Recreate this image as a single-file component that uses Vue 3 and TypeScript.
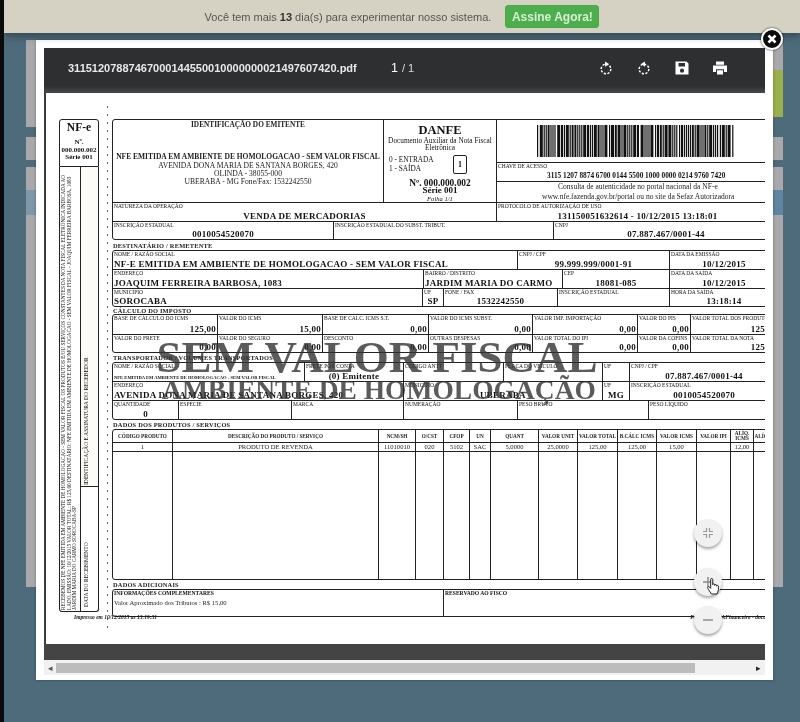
<template>
  <div class="screen">
    <!-- barra de teste -->
    <div class="trial">
      <span>Você tem mais <b>13</b> dia(s) para experimentar nosso sistema.</span>
      <button class="trial-btn" type="button">Assine Agora!</button>
    </div>

    <div class="stage">
      <!-- painéis da aplicação atrás do modal -->
      <div class="behind behind--left">
        <i class="seg seg-a"></i><i class="seg seg-b"></i><i class="seg seg-c"></i><i class="seg seg-blue"></i><i class="seg seg-d"></i>
      </div>

      <div class="modal">
        <button class="close" type="button" aria-label="Fechar">
          <svg viewBox="0 0 12 12" width="12" height="12"><path d="M2.5 2.5l7 7M9.5 2.5l-7 7" stroke="#fff" stroke-width="2.6" /></svg>
        </button>

        <div class="viewer">
          <div class="toolbar">
            <span class="file">{{ fileName }}</span>
            <span class="pages"><b>1</b> / 1</span>
            <div class="tools">
              <svg viewBox="0 0 16 16" width="16" height="16"><circle cx="8" cy="9" r="4.8" fill="none" stroke="#fff" stroke-width="1.5" stroke-dasharray="2.2 1.5" /><path d="M7 1.4l4 2.7-4 2.7z" fill="#fff" /></svg>
              <svg viewBox="0 0 16 16" width="16" height="16"><circle cx="8" cy="9" r="4.8" fill="none" stroke="#fff" stroke-width="1.5" stroke-dasharray="2.2 1.5" /><path d="M9 1.4l-4 2.7 4 2.7z" fill="#fff" /></svg>
              <svg viewBox="0 0 16 16" width="16" height="16"><path fill="#fff" fill-rule="evenodd" d="M1.5 1.5h11l2 2v11h-13zM4.5 3v3.6h6.5V3zM8 8.6a2.1 2.1 0 100 4.2 2.1 2.1 0 000-4.2z" /></svg>
              <svg viewBox="0 0 16 16" width="16" height="16"><path fill="#fff" fill-rule="evenodd" d="M4 1.5h8v3.2H4zM1 5.6h14v6.4h-3V9.3H4V12H1zM5 10.3h6V14.5H5z" /></svg>
            </div>
          </div>

          <div class="page">
            <div class="sheet">
              <!-- canhoto -->
              <aside class="stub">
                <div class="stub-head">
                  <strong>NF-e</strong>
                  <span>Nº.</span>
                  <span>000.000.002</span>
                  <span>Série 001</span>
                </div>
                <div class="stub-body">
                  <div class="stub-text">{{ stubText }}</div>
                  <div class="stub-side">
                    <div class="stub-sign">IDENTIFICAÇÃO E ASSINATURA DO RECEBEDOR</div>
                    <div class="stub-date">DATA DO RECEBIMENTO</div>
                  </div>
                </div>
              </aside>

              <div class="dash"></div>

              <div class="form">
                <!-- emitente / danfe / chave -->
                <section class="block">
                  <div class="head-row">
                    <div class="emit">
                      <b class="emit-title">IDENTIFICAÇÃO DO EMITENTE</b>
                      <b class="emit-name">NFE EMITIDA EM AMBIENTE DE HOMOLOGACAO - SEM VALOR FISCAL</b>
                      <span>AVENIDA DONA MARIA DE SANTANA BORGES, 420</span>
                      <span>OLINDA - 38055-000</span>
                      <span>UBERABA - MG Fone/Fax: 1532242550</span>
                    </div>
                    <div class="danfe">
                      <strong>DANFE</strong>
                      <span class="danfe-sub">Documento Auxiliar da Nota Fiscal Eletrônica</span>
                      <div class="danfe-io">
                        <span>0 - ENTRADA<br />1 - SAÍDA</span>
                        <b class="danfe-box">1</b>
                      </div>
                      <b class="danfe-num">Nº. 000.000.002<br /><span class="danfe-serie">Série 001</span></b>
                      <em>Folha 1/1</em>
                    </div>
                    <div class="key">
                      <div class="barcode">
                        <svg width="197" height="32" viewBox="0 0 197 32">
                          <rect v-for="bar in bars" :key="bar.x" :x="bar.x" y="0" :width="bar.w" height="32" fill="#111" />
                        </svg>
                      </div>
                      <div class="key-cell">
                        <span class="label">CHAVE DE ACESSO</span>
                        <b class="key-value">3115 1207 8874 6700 0144 5500 1000 0000 0214 9760 7420</b>
                      </div>
                      <div class="key-note">
                        <span>Consulta de autenticidade no portal nacional da NF-e</span>
                        <span>www.nfe.fazenda.gov.br/portal ou no site da Sefaz Autorizadora</span>
                      </div>
                    </div>
                  </div>
                  <FormRow v-for="(row, i) in topRows" :key="i" :row="row" />
                </section>

                <h4 class="title title--wide">DESTINATÁRIO / REMETENTE</h4>
                <section class="block">
                  <FormRow v-for="(row, i) in clientRows" :key="i" :row="row" />
                </section>

                <h4 class="title title--tight">CÁLCULO DO IMPOSTO</h4>
                <section class="block">
                  <FormRow v-for="(row, i) in taxRows" :key="i" :row="row" />
                </section>

                <h4 class="title">TRANSPORTADOR / VOLUMES TRANSPORTADOS</h4>
                <section class="block">
                  <FormRow v-for="(row, i) in carrierRows" :key="i" :row="row" />
                </section>

                <h4 class="title">DADOS DOS PRODUTOS / SERVIÇOS</h4>
                <section class="block products">
                  <div v-for="col in productCols" :key="col.label" class="prod-col" :style="{ width: col.w + 'px' }">
                    <div class="prod-head">{{ col.label }}</div>
                    <div class="prod-value">{{ col.value }}</div>
                  </div>
                </section>

                <h4 class="title">DADOS ADICIONAIS</h4>
                <section class="block">
                  <div class="row extra">
                    <div class="cell extra-info">
                      <b class="label">INFORMAÇÕES COMPLEMENTARES</b>
                      <span>Valor Aproximado dos Tributos : R$ 15,00</span>
                    </div>
                    <div class="cell extra-fisco"><b class="label">RESERVADO AO FISCO</b></div>
                  </div>
                </section>
              </div>
            </div>

            <div class="sheet-foot">
              <em>Impresso em 10/12/2015 as 13:19:31</em>
              <em class="powered">Powered by NAFinanceiro - documento</em>
            </div>

            <!-- marca d'água -->
            <div class="stamp">
              <div class="stamp-main">SEM VALOR FISCAL</div>
              <div class="stamp-sub">AMBIENTE DE HOMOLOGAÇÃO</div>
            </div>

            <!-- botões de zoom -->
            <div class="zoom">
              <button class="fab" type="button" aria-label="Ajustar">
                <svg viewBox="0 0 12 12" width="12" height="12"><path d="M4.5 1v3.5H1M7.5 1v3.5H11M4.5 11V7.5H1M7.5 11V7.5H11" fill="none" stroke="#999" stroke-width="1.2" /></svg>
              </button>
              <button class="fab fab--plus" type="button" aria-label="Aumentar">
                <svg viewBox="0 0 12 12" width="12" height="12"><path d="M6 1v10M1 6h10" stroke="#888" stroke-width="1.4" /></svg>
              </button>
              <button class="fab" type="button" aria-label="Diminuir">
                <svg viewBox="0 0 12 12" width="12" height="12"><path d="M1 6h10" stroke="#888" stroke-width="1.4" /></svg>
              </button>
            </div>
            <svg class="hand" viewBox="0 0 16 20" width="15" height="19">
              <path d="M5 10V2.6c0-1.5 2.2-1.5 2.2 0V8c0-1.2 2-1.2 2 0v.8c0-1.2 2-1.2 2 0v.8c0-1.1 2-1 2 .2v3.6c0 2-1 3-1.5 4.6H5.7c-.5-1.5-1.8-2.6-3-4.6-1-1.7-1.3-2.6-.6-3.1.8-.6 1.8.2 2.9 1.7z" fill="#fff" stroke="#111" stroke-width="1" stroke-linejoin="round" />
            </svg>
          </div>

          <div class="viewer-foot"></div>
        </div>

        <div class="scrollbar">
          <span class="arrow">◂</span>
          <div class="thumb"></div>
          <span class="arrow arrow--right">▸</span>
        </div>
      </div>

      <div class="behind behind--right">
        <i class="seg seg-r1"></i><i class="seg seg-green"></i><i class="seg seg-r2"></i><i class="seg seg-b"></i><i class="seg seg-c"></i><i class="seg seg-blue2"></i><i class="seg seg-d"></i>
      </div>
    </div>
  </div>
</template>

<script setup lang="ts">
import { defineComponent, h, type PropType } from 'vue'

type Cell = {
  w?: number
  label: string
  value?: string
  align?: 'left' | 'center' | 'right'
  small?: boolean
}
type Row = { h: number; cells: Cell[] }

// uma linha do formulário: rótulo em cima, valor encostado embaixo
const FormRow = defineComponent({
  props: { row: { type: Object as PropType<Row>, required: true } },
  setup(props) {
    return () =>
      h(
        'div',
        { class: 'form-row', style: { height: props.row.h + 'px' } },
        props.row.cells.map(c =>
          h('div', { class: 'form-cell', style: c.w ? { width: c.w + 'px' } : { flex: 1 } }, [
            h('span', { class: 'form-label' }, c.label),
            c.value
              ? h('b', { class: ['form-value', c.small ? 'is-small' : '', 'is-' + (c.align ?? 'center')] }, c.value)
              : null
          ])
        )
      )
  }
})

const fileName = '31151207887467000144550010000000021497607420.pdf'

const stubText =
  'RECEBEMOS DE NFE EMITIDA EM AMBIENTE DE HOMOLOGACAO - SEM VALOR FISCAL OS PRODUTOS E/OU SERVIÇOS CONSTANTES DA NOTA FISCAL ELETRÔNICA ' +
  'INDICADA AO LADO, EMISSÃO: 10/12/2015 VALOR TOTAL: R$ 125,00 DESTINATÁRIO: NFE EMITIDA EM AMBIENTE DE HOMOLOGACAO - SEM VALOR FISCAL - JOAQUIM ' +
  'FERREIRA BARBOSA, 1083 JARDIM MARIA DO CARMO SOROCABA-SP'

// código de barras: padrão pseudo-aleatório fixo
const bars = (() => {
  const out: { x: number; w: number }[] = []
  let x = 0
  let seed = 7
  while (x < 196) {
    seed = (seed * 137 + 59) % 251
    const w = seed % 5 === 0 ? 3 : seed % 3 === 0 ? 2 : 1.2
    out.push({ x, w: Math.min(w, 197 - x) })
    x += w + (seed % 7 === 0 ? 1.6 : 0.8)
  }
  return out
})()

const topRows: Row[] = [
  {
    h: 19,
    cells: [
      { w: 383, label: 'NATUREZA DA OPERAÇÃO', value: 'VENDA DE MERCADORIAS' },
      { label: 'PROTOCOLO DE AUTORIZAÇÃO DE USO', value: '131150051632614  -  10/12/2015 13:18:01' }
    ]
  },
  {
    h: 18,
    cells: [
      { w: 220, label: 'INSCRIÇÃO ESTADUAL', value: '0010054520070' },
      { w: 220, label: 'INSCRIÇÃO ESTADUAL DO SUBST. TRIBUT.' },
      { label: 'CNPJ', value: '07.887.467/0001-44' }
    ]
  }
]

const clientRows: Row[] = [
  {
    h: 18,
    cells: [
      { w: 404, label: 'NOME / RAZÃO SOCIAL', value: 'NF-E EMITIDA EM AMBIENTE DE HOMOLOGACAO - SEM VALOR FISCAL', align: 'left' },
      { w: 152, label: 'CNPJ / CPF', value: '99.999.999/0001-91' },
      { label: 'DATA DA EMISSÃO', value: '10/12/2015' }
    ]
  },
  {
    h: 19,
    cells: [
      { w: 310, label: 'ENDEREÇO', value: 'JOAQUIM FERREIRA BARBOSA, 1083', align: 'left' },
      { w: 139, label: 'BAIRRO / DISTRITO', value: 'JARDIM MARIA DO CARMO', align: 'left' },
      { w: 107, label: 'CEP', value: '18081-085' },
      { label: 'DATA DA SAÍDA', value: '10/12/2015' }
    ]
  },
  {
    h: 18,
    cells: [
      { w: 309, label: 'MUNICÍPIO', value: 'SOROCABA', align: 'left' },
      { w: 21, label: 'UF', value: 'SP' },
      { w: 114, label: 'FONE / FAX', value: '1532242550' },
      { w: 112, label: 'INSCRIÇÃO ESTADUAL' },
      { label: 'HORA DA SAÍDA', value: '13:18:14' }
    ]
  }
]

const taxRows: Row[] = [
  {
    h: 19,
    cells: [
      { w: 104, label: 'BASE DE CÁLCULO DO ICMS', value: '125,00', align: 'right' },
      { w: 105, label: 'VALOR DO ICMS', value: '15,00', align: 'right' },
      { w: 106, label: 'BASE DE CALC. ICMS S.T.', value: '0,00', align: 'right' },
      { w: 104, label: 'VALOR DO ICMS SUBST.', value: '0,00', align: 'right' },
      { w: 105, label: 'VALOR IMP. IMPORTAÇÃO', value: '0,00', align: 'right' },
      { w: 53, label: 'VALOR DO PIS', value: '0,00', align: 'right' },
      { label: 'VALOR TOTAL DOS PRODUTOS', value: '125,00', align: 'right' }
    ]
  },
  {
    h: 18,
    cells: [
      { w: 104, label: 'VALOR DO FRETE', value: '0,00', align: 'right' },
      { w: 105, label: 'VALOR DO SEGURO', value: '0,00', align: 'right' },
      { w: 106, label: 'DESCONTO', value: '0,00', align: 'right' },
      { w: 104, label: 'OUTRAS DESPESAS', value: '0,00', align: 'right' },
      { w: 105, label: 'VALOR TOTAL DO IPI', value: '0,00', align: 'right' },
      { w: 53, label: 'VALOR DA COFINS', value: '0,00', align: 'right' },
      { label: 'VALOR TOTAL DA NOTA', value: '125,00', align: 'right' }
    ]
  }
]

const carrierRows: Row[] = [
  {
    h: 18,
    cells: [
      { w: 191, label: 'NOME / RAZÃO SOCIAL', value: 'NFE EMITIDA EM AMBIENTE DE HOMOLOGACAO - SEM VALOR FISCAL', align: 'left', small: true },
      { w: 99, label: 'FRETE POR CONTA', value: '(0) Emitente' },
      { w: 100, label: 'CÓDIGO ANTT' },
      { w: 99, label: 'PLACA DO VEÍCULO' },
      { w: 27, label: 'UF' },
      { label: 'CNPJ / CPF', value: '07.887.467/0001-44' }
    ]
  },
  {
    h: 19,
    cells: [
      { w: 290, label: 'ENDEREÇO', value: 'AVENIDA DONA MARIA DE SANTANA BORGES, 420', align: 'left' },
      { w: 199, label: 'MUNICÍPIO', value: 'UBERABA' },
      { w: 27, label: 'UF', value: 'MG' },
      { label: 'INSCRIÇÃO ESTADUAL', value: '0010054520070' }
    ]
  },
  {
    h: 19,
    cells: [
      { w: 65, label: 'QUANTIDADE', value: '0' },
      { w: 113, label: 'ESPÉCIE' },
      { w: 112, label: 'MARCA' },
      { w: 114, label: 'NUMERAÇÃO' },
      { w: 131, label: 'PESO BRUTO' },
      { label: 'PESO LÍQUIDO' }
    ]
  }
]

const productCols = [
  { w: 60, label: 'CÓDIGO PRODUTO', value: '1' },
  { w: 206, label: 'DESCRIÇÃO DO PRODUTO / SERVIÇO', value: 'PRODUTO DE REVENDA' },
  { w: 37, label: 'NCM/SH', value: '11010010' },
  { w: 28, label: 'O/CST', value: '020' },
  { w: 26, label: 'CFOP', value: '5102' },
  { w: 21, label: 'UN', value: 'SAC' },
  { w: 48, label: 'QUANT', value: '5,0000' },
  { w: 39, label: 'VALOR UNIT', value: '25,0000' },
  { w: 40, label: 'VALOR TOTAL', value: '125,00' },
  { w: 39, label: 'B.CÁLC ICMS', value: '125,00' },
  { w: 40, label: 'VALOR ICMS', value: '15,00' },
  { w: 34, label: 'VALOR IPI', value: '' },
  { w: 23, label: 'ALÍQ. ICMS', value: '12,00' },
  { w: 24, label: 'ALÍQ. IPI', value: '' }
]
</script>

<style>
.form-row {
  display: flex;
  box-sizing: border-box;
  border-top: 1px solid #222;
}
.form-row:first-child { border-top: 0; }
.form-cell {
  display: flex;
  flex-direction: column;
  justify-content: space-between;
  box-sizing: border-box;
  min-width: 0;
  overflow: hidden;
  white-space: nowrap;
}
.form-cell + .form-cell { border-left: 1px solid #222; }
.form-label {
  font-size: 5.5px;
  line-height: 6px;
  padding-left: 1px;
  color: #111;
}
.form-value {
  font-size: 9px;
  line-height: 10px;
  letter-spacing: .25px;
  color: #111;
  padding: 0 1px;
}
.form-value.is-small { font-size: 4.6px; line-height: 6px; letter-spacing: 0; }
.is-left { text-align: left; }
.is-center { text-align: center; }
.is-right { text-align: right; }
</style>

<style scoped>
.screen {
  position: relative;
  width: 800px;
  height: 722px;
  overflow: hidden;
  box-sizing: border-box;
  border-left: 4px solid #0a0a0a;
  background: #4e6b7b;
  font-family: "Liberation Sans", Arial, sans-serif;
  filter: blur(.35px);
}

/* barra de teste */
.trial {
  display: flex;
  align-items: center;
  justify-content: center;
  gap: 14px;
  height: 33px;
  background: #d5d2c4;
  color: #555;
  font-size: 11px;
  box-shadow: 0 3px 7px rgba(30, 40, 50, .55);
  position: relative;
  z-index: 2;
}
.trial b { color: #333; }
.trial-btn {
  width: 94px;
  height: 23px;
  padding: 0;
  border: 1px solid #4aa84a;
  border-radius: 3px;
  background: #4cae4c;
  color: #d8efd4;
  font: bold 12px "Liberation Sans", Arial, sans-serif;
  white-space: nowrap;
}

.stage {
  display: flex;
  align-items: flex-start;
  padding: 7px 0 0 22px;
}

/* restos da tela atrás do modal */
.behind {
  display: flex;
  flex-direction: column;
  width: 10px;
  height: 547px;
  flex-shrink: 0;
}
.seg { display: block; background: #a9a9ab; }
.seg-a { height: 87px; margin-bottom: 10px; }
.seg-b { height: 23px; margin-bottom: 7px; }
.seg-c { height: 23px; }
.seg-blue { height: 25px; background: #7e98a9; }
.seg-d { flex: 1; }
.seg-r1 { height: 30px; }
.seg-green { height: 47px; margin-bottom: 20px; background: #9ab04c; }
.seg-blue2 { height: 25px; background: #5f85a0; }

.modal {
  position: relative;
  box-sizing: border-box;
  width: 737px;
  height: 640px;
  flex-shrink: 0;
  padding: 8px 8px 5px;
  background: #fff;
  box-shadow: 0 0 3px rgba(0, 0, 0, .3);
}
.close {
  position: absolute;
  top: -12px;
  right: -10px;
  z-index: 5;
  display: flex;
  align-items: center;
  justify-content: center;
  width: 22px;
  height: 22px;
  padding: 0;
  border: 2px solid #fff;
  border-radius: 50%;
  background: #0c0c0c;
  box-shadow: 0 0 2px #000;
}

.viewer {
  display: flex;
  flex-direction: column;
  height: 612px;
  background: #3a3b3d;
}
.toolbar {
  position: relative;
  display: flex;
  align-items: center;
  flex-shrink: 0;
  height: 45px;
  padding: 0 0 6px 24px;
  box-sizing: border-box;
  background: linear-gradient(#2e2f31 0, #2e2f31 38px, #48494b 45px);
  color: #fff;
}
.file { width: 323px; font-size: 11px; font-weight: bold; color: #e8e8e8; white-space: nowrap; }
.pages { font-size: 11px; color: #ddd; }
.pages b { font-size: 12.5px; font-weight: normal; margin-right: 1px; color: #fff; }
.tools {
  display: flex;
  gap: 22px;
  margin-left: 184px;
}

.page {
  position: relative;
  flex: 1;
  min-height: 0;
  margin-left: 2px;
  overflow: hidden;
  background: #fff;
  font-family: "Liberation Serif", "Times New Roman", serif;
  color: #111;
}
.sheet {
  display: flex;
  padding: 13px 0 0 13px;
}

/* canhoto */
.stub {
  flex: 0 0 40px;
  margin-top: 13px;
}
.stub-head {
  box-sizing: border-box;
  height: 48px;
  display: flex;
  flex-direction: column;
  align-items: center;
  border: 1px solid #222;
  border-radius: 3px 3px 0 0;
  font-size: 7px;
  font-weight: bold;
  line-height: 7.5px;
  white-space: nowrap;
}
.stub-head strong { font-size: 11.5px; line-height: 13px; margin: 1px 0 5px; }
.stub-body {
  display: flex;
  height: 445px;
  box-sizing: border-box;
  border: 1px solid #222;
  border-top: 0;
  border-radius: 0 0 3px 3px;
}
.stub-text {
  box-sizing: border-box;
  width: 21px;
  height: 100%;
  padding: 1px 1px 0 0;
  border-left: 1px solid #222;
  writing-mode: vertical-rl;
  transform: rotate(180deg);
  font-size: 5.2px;
  line-height: 5.6px;
  text-align: left;
}
.stub-side {
  flex: 1;
  display: flex;
  flex-direction: column;
}
.stub-sign, .stub-date {
  box-sizing: border-box;
  writing-mode: vertical-rl;
  transform: rotate(180deg);
  font-size: 5.6px;
  line-height: 7px;
  white-space: nowrap;
  padding-right: 2px;
}
.stub-sign {
  height: 320px;
  padding-top: 1px;
  border-top: 1px solid #222;
  background: #fdfbf8;
}
.stub-date {
  flex: 1;
  padding-top: 4px;
}

.dash {
  flex: 0 0 1px;
  height: 523px;
  margin: 0 4px 0 8px;
  background: repeating-linear-gradient(#666 0 2px, transparent 2px 8px);
}

.form { flex: 0 0 666px; margin-top: 13px; margin-left: 0; }
.block {
  border: 1px solid #222;
  border-radius: 3px;
}
.title {
  margin: 0;
  height: 9px;
  padding-left: 1px;
  font-size: 6.4px;
  line-height: 9px;
  letter-spacing: .2px;
  color: #222;
  white-space: nowrap;
}
.title--wide { height: 10px; line-height: 11px; }
.title--tight { height: 7px; line-height: 7px; }

.head-row {
  display: flex;
  height: 82px;
}
.emit {
  box-sizing: border-box;
  flex: 0 0 270px;
  display: flex;
  flex-direction: column;
  align-items: center;
  font-size: 7.6px;
  line-height: 7.8px;
  white-space: nowrap;
  color: #222;
}
.emit-title { font-size: 7.3px; line-height: 8px; margin: 1px 0 23px; }
.emit-name { font-size: 7.5px; line-height: 9px; margin-bottom: 1px; }
.danfe {
  box-sizing: border-box;
  flex: 0 0 113px;
  display: flex;
  flex-direction: column;
  align-items: center;
  border-left: 1px solid #222;
  font-size: 7.3px;
  line-height: 7.4px;
  text-align: center;
}
.danfe strong { font-size: 12.5px; line-height: 13px; margin-top: 4px; }
.danfe-sub { padding: 0 2px; }
.danfe-io {
  display: flex;
  align-items: center;
  justify-content: space-between;
  width: 100%;
  box-sizing: border-box;
  padding: 3px 29px 0 5px;
  text-align: left;
  white-space: nowrap;
  line-height: 9px;
}
.danfe-box {
  display: block;
  width: 12px;
  height: 17px;
  border: 1px solid #222;
  border-radius: 2px;
  font-size: 8px;
  line-height: 17px;
  text-align: center;
}
.danfe-num { font-size: 9.4px; line-height: 7.5px; margin-top: 6px; white-space: nowrap; }
.danfe-serie { font-size: 9px; }
.danfe em { font-size: 6.6px; line-height: 7px; }
.key {
  flex: 1;
  display: flex;
  flex-direction: column;
  border-left: 1px solid #222;
}
.barcode {
  box-sizing: border-box;
  height: 42px;
  padding: 5px 0 0 40px;
}
.barcode svg { display: block; }
.key-cell {
  box-sizing: border-box;
  display: flex;
  flex-direction: column;
  height: 20px;
  border-top: 1px solid #222;
  border-bottom: 1px solid #222;
}
.label { font-size: 5.5px; line-height: 6px; padding-left: 1px; color: #111; }
.key-value { font-size: 7.3px; line-height: 8px; padding: 3px 0 0 50px; white-space: nowrap; }
.key-note {
  display: flex;
  flex-direction: column;
  align-items: flex-start;
  padding-left: 61px;
  font-size: 7.5px;
  line-height: 10px;
  color: #222;
  white-space: nowrap;
}
.key-note span + span { margin-left: -16px; }

.products {
  display: flex;
  box-sizing: border-box;
  height: 151px;
}
.prod-col {
  box-sizing: border-box;
  flex-shrink: 0;
  text-align: center;
  color: #222;
  border-right: 1px solid #222;
}
.prod-col:last-child { border-right: 0; }
.prod-head {
  box-sizing: border-box;
  display: flex;
  align-items: center;
  justify-content: center;
  height: 13px;
  border-bottom: 1px solid #222;
  line-height: 5px;
  font-size: 5.2px;
  font-weight: bold;
  white-space: pre-wrap;
}
.prod-value {
  box-sizing: border-box;
  height: 9px;
  border-bottom: 1px solid #222;
  line-height: 8px;
  font-size: 6.6px;
  white-space: nowrap;
}

.row { display: flex; }
.extra { height: 26px; }
.cell { box-sizing: border-box; display: flex; flex-direction: column; }
.extra-info {
  flex: 0 0 330px;
  font-size: 6.6px;
  line-height: 7px;
  color: #222;
}
.extra-info .label { font-size: 5.6px; line-height: 7px; margin-bottom: 2px; white-space: nowrap; }
.extra-info span { padding-left: 1px; }
.extra-fisco { flex: 1; border-left: 1px solid #222; }
.extra-fisco .label { font-size: 5.6px; line-height: 7px; }

.sheet-foot {
  display: flex;
  margin-top: -15px;
  padding-left: 28px;
  font-size: 5.5px;
  font-weight: bold;
  white-space: nowrap;
}
.powered { margin-left: 533px; }

/* marca d'água */
.stamp {
  position: absolute;
  top: 243px;
  left: 105px;
  width: 452px;
  text-align: center;
  font-weight: bold;
  color: rgba(50, 50, 50, .8);
  white-space: nowrap;
  pointer-events: none;
}
.stamp-main { font-size: 45px; line-height: 42px; }
.stamp-sub { font-size: 27.5px; line-height: 24px; padding-left: 4px; }

/* botões flutuantes */
.zoom {
  position: absolute;
  top: 426px;
  left: 648px;
  display: flex;
  flex-direction: column;
  gap: 10px;
}
.fab {
  display: flex;
  align-items: center;
  justify-content: center;
  width: 28px;
  height: 28px;
  padding: 0;
  border: 0;
  border-radius: 50%;
  background: #f1f1f1;
  box-shadow: 0 2px 3px rgba(0, 0, 0, .35);
}
.fab--plus { margin-top: 11px; }
.hand {
  position: absolute;
  top: 484px;
  left: 660px;
}

.viewer-foot {
  flex-shrink: 0;
  height: 16px;
  background: #444;
}

.scrollbar {
  display: flex;
  align-items: center;
  height: 15px;
  background: #f1f1f1;
  font-size: 9px;
  color: #555;
}
.arrow { width: 12px; text-align: center; }
.thumb {
  width: 639px;
  height: 10px;
  background: #bcbcbc;
}
.arrow--right { margin-left: auto; width: 14px; color: #222; }
</style>
